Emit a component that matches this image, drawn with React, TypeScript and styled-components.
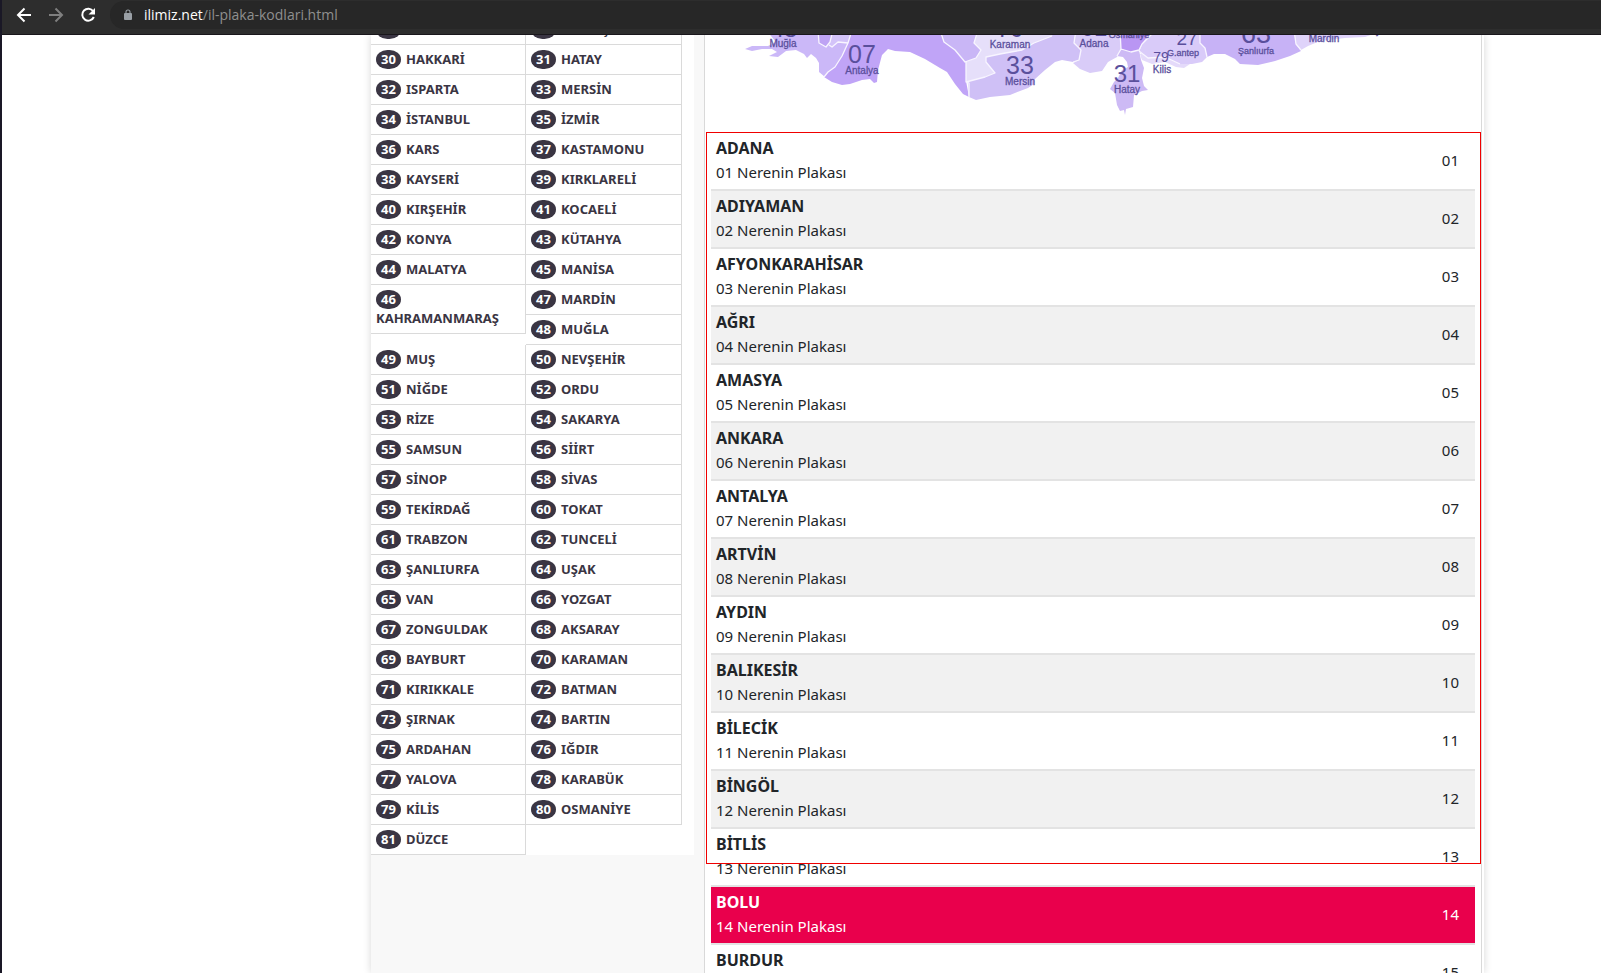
import React from 'react';
import styled, { createGlobalStyle } from 'styled-components';

const Global = createGlobalStyle`
  * { box-sizing: border-box; }
  html { background: #fff; }
  body {
    margin: 0;
    font-family: "Noto Sans", "Open Sans", sans-serif;
    font-size: 15px;
    line-height: 24px;
    color: #212529;
  }
`;

const Window = styled.div`
  height: 100vh;
  display: flex;
  flex-direction: column;
  overflow: hidden;
  border-left: 2px solid #1a1826;
`;

const Toolbar = styled.header`
  flex: none;
  display: flex;
  align-items: center;
  height: 35px;
  padding: 0 0 5px 6px;
  background: #2d2d2d;
  border-bottom: 1px solid #19161b;
`;

const ToolButton = styled.button<{ $dim?: boolean }>`
  display: flex;
  align-items: center;
  justify-content: center;
  width: 32px;
  height: 28px;
  padding: 0;
  border: 0;
  background: none;
  color: ${p => (p.$dim ? '#7f7f7f' : '#fff')};
`;

const AddressBar = styled.div`
  flex: 1;
  display: flex;
  align-items: center;
  gap: 12px;
  height: 28px;
  margin-left: 6px;
  padding-left: 14px;
  border-radius: 14px 0 0 14px;
  background: #272727;
`;

const Url = styled.div`
  font-family: "Open Sans", "Noto Sans", sans-serif;
  font-size: 14px;
  line-height: 20px;
  color: #8f8f8f;
`;

const Host = styled.span`
  color: #fff;
`;

const Viewport = styled.div`
  flex: 1;
  min-height: 0;
  display: flex;
  overflow: hidden;
  background: #fff;
`;

const Container = styled.div`
  flex: 1;
  display: flex;
  align-items: stretch;
  gap: 10px;
  margin: 0 117px 0 369px;
  background: #f8f8f8;
  border-right: 2px solid #fff;
  box-shadow: 0 0 8px rgba(0, 0, 0, 0.16);
`;

const Sidebar = styled.aside`
  flex: none;
  align-self: flex-start;
  width: 323px;
  margin-top: -20px;
  padding-right: 12px;
  background: #fff;
`;

const CodeGrid = styled.ul`
  display: grid;
  grid-template-columns: 155px 1fr;
  grid-auto-rows: 30px;
  margin: 0;
  padding: 0;
  list-style: none;
`;

const CodeItem = styled.li<{ $tall?: boolean }>`
  ${p => p.$tall && 'grid-row: span 2; align-self: start;'}
  padding: 5px;
  border-right: 1px solid #dadada;
  border-bottom: 1px solid #dadada;
`;

const CodeLink = styled.a`
  display: block;
  color: #3a3543;
  font-size: 13px;
  font-weight: 700;
  line-height: 19px;
  text-decoration: none;
`;

const Pill = styled.span`
  display: inline-block;
  width: 25px;
  height: 19px;
  margin-right: 5px;
  border-radius: 12px / 10px;
  background: #3a3543;
  color: #fff;
  text-align: center;
  vertical-align: top;
`;

const Main = styled.main`
  flex: 1;
  min-width: 0;
  background: #fff;
  border-left: 1px solid #d9d9d9;
  border-right: 1px solid #d9d9d9;
`;

const MapArt = styled.svg`
  display: block;
  width: 100%;
  height: 98px;
`;

const TableArea = styled.div`
  position: relative;
  padding: 0 6px;
`;

const Outline = styled.div`
  position: absolute;
  top: -1px;
  left: 1px;
  right: 0;
  height: 732px;
  border: 1px solid #f00000;
  pointer-events: none;
`;

const PlateTable = styled.table`
  width: 100%;
  border-collapse: separate;
  border-spacing: 0;
`;

const PlateRow = styled.tr<{ $active?: boolean }>`
  color: ${p => (p.$active ? '#fff' : 'inherit')};
  background: ${p => (p.$active ? '#e9004c' : '#fff')};
  &:nth-child(even) {
    background: ${p => (p.$active ? '#e9004c' : '#f1f1f1')};
  }
`;

const NameCell = styled.td`
  padding: 3px 5px 5px;
  border-bottom: 2px solid #e3e3e3;
`;

const CodeCell = styled.td`
  padding: 3px 16px 5px 5px;
  border-bottom: 2px solid #e3e3e3;
  text-align: right;
`;

const City = styled.strong`
  display: block;
  font-size: 16px;
  font-weight: 700;
`;

const PlateLink = styled.a`
  display: block;
  color: inherit;
  text-decoration: none;
`;

const MapText = styled.text<{ $size: number }>`
  font-family: "Liberation Sans Narrow", "Liberation Sans", sans-serif;
  font-size: ${p => p.$size}px;
  text-anchor: middle;
  fill: #5a4f9c;
  ${p => p.$size < 14 && 'stroke: #5a4f9c; stroke-width: 0.3;'}
`;

const sideCities = [
  'GİRESUN', 'GÜMÜŞHANE', 'HAKKARİ', 'HATAY', 'ISPARTA', 'MERSİN', 'İSTANBUL', 'İZMİR', 'KARS',
  'KASTAMONU', 'KAYSERİ', 'KIRKLARELİ', 'KIRŞEHİR', 'KOCAELİ', 'KONYA', 'KÜTAHYA', 'MALATYA',
  'MANİSA', 'KAHRAMANMARAŞ', 'MARDİN', 'MUĞLA', 'MUŞ', 'NEVŞEHİR', 'NİĞDE', 'ORDU', 'RİZE',
  'SAKARYA', 'SAMSUN', 'SİİRT', 'SİNOP', 'SİVAS', 'TEKİRDAĞ', 'TOKAT', 'TRABZON', 'TUNCELİ',
  'ŞANLIURFA', 'UŞAK', 'VAN', 'YOZGAT', 'ZONGULDAK', 'AKSARAY', 'BAYBURT', 'KARAMAN',
  'KIRIKKALE', 'BATMAN', 'ŞIRNAK', 'BARTIN', 'ARDAHAN', 'IĞDIR', 'YALOVA', 'KARABÜK', 'KİLİS',
  'OSMANİYE', 'DÜZCE',
].map((name, i) => ({ name, code: i + 28 }));

const plates = [
  'ADANA', 'ADIYAMAN', 'AFYONKARAHİSAR', 'AĞRI', 'AMASYA', 'ANKARA', 'ANTALYA', 'ARTVİN',
  'AYDIN', 'BALIKESİR', 'BİLECİK', 'BİNGÖL', 'BİTLİS', 'BOLU', 'BURDUR',
].map((name, i) => ({ name, code: String(i + 1).padStart(2, '0') }));

const provinces: { fill: string; d: string }[] = [
  { fill: '#cbb8f8', d: 'M766 30L776 42L768 46L752 46L745 49L752 51L762 49L772 49L777 52L769 56L778 57L786 51L796 50L804 54L807 58L811 54L816 58L819 63L819 72L825 77L828 72L835 67L842 56L848 43L850 30Z' },
  { fill: '#bea3f4', d: 'M818 30L819 43L826 47L830 42L833 30Z' },
  { fill: '#d3c3f9', d: 'M833 30L829 45L832 47L838 42L848 43L852 30Z' },
  { fill: '#c0a4f7', d: 'M852 30L848 43L842 56L835 67L828 72L824 77L832 82L842 85L850 84L862 80L870 79L874 83L877 82L878 70L882 55L888 49L895 51L910 52L925 59L940 68L947 72L955 84L963 94L969 97L966 81L966 61L955 50L944 42L940 30Z' },
  { fill: '#c9b6f6', d: 'M940 30L944 42L955 50L965 62L976 58L981 50L974 43L978 30Z' },
  { fill: '#cfc0f6', d: 'M966 61L969 97L976 100L990 97L1010 95L1020 91L1028 88L1034 84L1035 79L1045 70L1055 62L1062 60L1073 62L1079 60L1081 50L1074 43L1076 30L1050 30Z' },
  { fill: '#e6dffa', d: 'M978 30L974 43L981 50L976 58L966 62L966 82L985 77L995 73L986 62L986 57L1000 54L1022 50L1034 43L1052 36L1056 30Z' },
  { fill: '#d9ccf8', d: 'M1076 30L1074 43L1081 50L1079 60L1073 63L1080 69L1090 73L1102 71L1108 62L1117 57L1121 50L1120 30Z' },
  { fill: '#cdbaf5', d: 'M1121 50L1117 56L1123 57L1127 62L1128 67L1122 70L1118 78L1114 82L1110 89L1115 93L1117 105L1120 111L1124 110L1125 115L1126 109L1133 107L1134 95L1142 91L1148 90L1144 86L1142 78L1144 68L1141 60L1139 50Z' },
  { fill: '#b996f3', d: 'M1120 30L1121 49L1131 52L1139 50L1142 44L1152 30Z' },
  { fill: '#e4dafa', d: 'M1140 54L1142 60L1152 64L1165 62L1176 67L1184 68L1190 64L1178 58L1160 54Z' },
  { fill: '#d9cbf9', d: 'M1152 30L1142 44L1139 52L1148 58L1165 57L1180 64L1192 64L1202 62L1207 57L1205 48L1200 43L1200 30Z' },
  { fill: '#c7b2f6', d: 'M1200 30L1200 43L1205 48L1207 57L1214 54L1225 54L1235 59L1240 64L1258 65L1275 61L1290 56L1301 51L1296 44L1294 30Z' },
  { fill: '#dfd3fa', d: 'M1294 30L1296 44L1301 50L1308 46L1320 41L1345 38L1365 37L1385 30Z' },
];

const mapLabels: [string, number, number, number][] = [
  ['48', 784, 37, 24], ['Muğla', 783, 47, 10], ['07', 862, 63, 25], ['Antalya', 862, 74, 10],
  ['70', 1010, 37, 24], ['Karaman', 1010, 48, 10], ['33', 1020, 74, 25], ['Mersin', 1020, 85, 10],
  ['01', 1094, 36, 24], ['Adana', 1094, 47, 10], ['Osmaniye', 1129, 38, 9],
  ['27', 1187, 45, 19], ['G.antep', 1183, 56, 9], ['79', 1161, 62, 14], ['Kilis', 1162, 73, 10],
  ['31', 1127, 82, 24], ['Hatay', 1127, 93, 10], ['63', 1256, 43, 27], ['Şanlıurfa', 1256, 54, 9],
  ['Mardin', 1324, 42, 10], ['Şırnak', 1388, 34, 10],
];

function ProvinceMap() {
  return (
    <MapArt viewBox="705 35 776 98" preserveAspectRatio="xMinYMin slice" role="img" aria-label="Türkiye il plaka haritası">
      {provinces.map(p => (
        <path key={p.d} d={p.d} fill={p.fill} />
      ))}
      <g fill="none" stroke="#f8f5ff" strokeWidth="1.3" strokeLinejoin="round">
        <path d="M818 30L819 43L826 47L830 42L833 30M829 45L832 47L838 42L848 43L842 56L835 67L828 72L824 77M848 43L852 30" />
        <path d="M940 30L944 42L955 50L965 62L976 58L981 50L974 43L978 30M966 61L966 82L969 83L969 97M966 82L985 77L995 73L986 62L986 57L1000 54L1022 50L1034 43L1052 36" />
        <path d="M1076 30L1074 43L1081 50L1079 60L1073 62M1120 30L1121 49L1117 56M1121 49L1131 52L1139 50L1142 44L1152 34M1139 51L1148 58L1165 57L1180 64" />
        <path d="M1200 30L1200 43L1205 48L1207 57M1294 30L1296 44L1301 50" />
      </g>
      {mapLabels.map(([text, x, y, size]) => (
        <MapText key={text} x={x} y={y} $size={size}>{text}</MapText>
      ))}
    </MapArt>
  );
}

export default function App() {
  return (
    <Window>
      <Global />
      <Toolbar>
        <ToolButton type="button" aria-label="Geri">
          <svg width="16" height="16" viewBox="0 0 16 16" fill="none" stroke="currentColor" strokeWidth="2">
            <path d="M15 8H2.5M8.5 1.5L2 8l6.500 6.500" />
          </svg>
        </ToolButton>
        <ToolButton type="button" aria-label="İleri" $dim>
          <svg width="16" height="16" viewBox="0 0 16 16" fill="none" stroke="currentColor" strokeWidth="2">
            <path d="M1 8h12.500M7.500 1.500L14 8l-6.500 6.500" />
          </svg>
        </ToolButton>
        <ToolButton type="button" aria-label="Yenile">
          <svg width="16" height="16" viewBox="0 0 16 16">
            <path d="M13.200 4.200A6 6 0 1 0 13.800 10" fill="none" stroke="currentColor" strokeWidth="2" />
            <path d="M15 1v6.500H8.500z" fill="currentColor" />
          </svg>
        </ToolButton>
        <AddressBar>
          <svg width="8" height="12" viewBox="0 0 8 12" aria-hidden="true">
            <rect y="4" width="8" height="7" rx="1" fill="#9aa0a6" />
            <path d="M2 4.500V3a2 2 0 0 1 4 0v1.500" fill="none" stroke="#9aa0a6" strokeWidth="1.100" />
          </svg>
          <Url role="textbox" aria-label="Adres" tabIndex={0}>
            <Host>ilimiz.net</Host>/il-plaka-kodlari.html
          </Url>
        </AddressBar>
      </Toolbar>
      <Viewport>
        <Container>
          <Sidebar>
            <CodeGrid>
              {sideCities.map(c => (
                <CodeItem key={c.code} $tall={c.name === 'KAHRAMANMARAŞ'}>
                  <CodeLink href={`#plaka-${c.code}`}>
                    <Pill>{c.code}</Pill>{c.name}
                  </CodeLink>
                </CodeItem>
              ))}
            </CodeGrid>
          </Sidebar>
          <Main>
            <ProvinceMap />
            <TableArea>
              <PlateTable>
                <tbody>
                  {plates.map(p => (
                    <PlateRow key={p.code} $active={p.name === 'BOLU'}>
                      <NameCell>
                        <City>{p.name}</City>
                        <PlateLink href={`#plaka-${p.code}`}>{p.code} Nerenin Plakası</PlateLink>
                      </NameCell>
                      <CodeCell>{p.code}</CodeCell>
                    </PlateRow>
                  ))}
                </tbody>
              </PlateTable>
              <Outline />
            </TableArea>
          </Main>
        </Container>
      </Viewport>
    </Window>
  );
}
